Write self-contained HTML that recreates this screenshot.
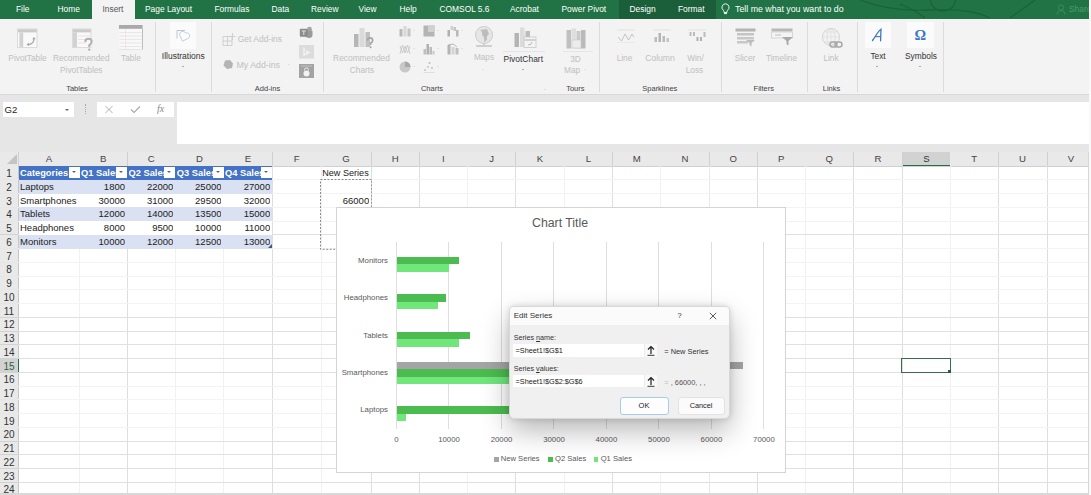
<!DOCTYPE html>
<html><head><meta charset="utf-8">
<style>
*{margin:0;padding:0;box-sizing:border-box}
html,body{width:1091px;height:495px;overflow:hidden;background:#fff;font-family:"Liberation Sans",sans-serif;position:relative}
.a{position:absolute}
.t{position:absolute;white-space:nowrap;line-height:1}
.tab{color:#fff;font-size:8.4px;top:5px}
.dis{position:absolute;white-space:nowrap;line-height:1;color:#c0c0c0;font-size:8.3px}
.en{position:absolute;white-space:nowrap;line-height:1;color:#333;font-size:8.3px}
.gl{position:absolute;white-space:nowrap;line-height:1;color:#444;font-size:7.6px;top:85px}
.sep{position:absolute;top:22px;width:1px;height:70px;background:#dadada}
.box{position:absolute;background:#fff}
.ch{position:absolute;top:152px;height:14px;font-size:9.6px;color:#444;text-align:center;line-height:14px}
.cs{position:absolute;top:152px;width:1px;height:14px;background:#d0d0d0}
.rh{position:absolute;left:0;width:18px;font-size:10px;color:#444;text-align:center;line-height:13.75px;height:13.75px}
.vg{position:absolute;top:166px;width:1px;height:329px;background:#e2e2e2}
.hg{position:absolute;left:18px;width:1073px;height:1px;background:#e6e6e6}
.cell{position:absolute;font-size:9.5px;color:#222;line-height:13.75px;height:13.75px;white-space:nowrap;overflow:hidden}
.r{text-align:right}
.hd{color:#fff;font-weight:bold}
.dd{position:absolute;width:11px;height:11.6px;background:#fff}
.dd:after{content:"";position:absolute;left:3.2px;top:4.6px;border-left:2.3px solid transparent;border-right:2.3px solid transparent;border-top:2.5px solid #666}
.al{position:absolute;font-size:8px;color:#595959;white-space:nowrap;line-height:1}

#root{position:absolute;left:0;top:0;width:1091px;height:495px;overflow:hidden;background:#fff}

</style></head><body><div id="root">
<div class="a" style="left:0;top:0;width:1091px;height:19px;background:#217346"></div>
<div class="a" style="left:619px;top:0;width:97px;height:19px;background:#1b5f3a"></div>
<div class="a" style="left:92px;top:0;width:43px;height:20px;background:#f3f3f3"></div>
<div class="t tab" style="left:16px">File</div>
<div class="t tab" style="left:57.5px">Home</div>
<div class="t tab" style="left:145px">Page Layout</div>
<div class="t tab" style="left:214.5px">Formulas</div>
<div class="t tab" style="left:271.5px">Data</div>
<div class="t tab" style="left:311px">Review</div>
<div class="t tab" style="left:358.5px">View</div>
<div class="t tab" style="left:399.5px">Help</div>
<div class="t tab" style="left:439.5px">COMSOL 5.6</div>
<div class="t tab" style="left:510px">Acrobat</div>
<div class="t tab" style="left:561.5px">Power Pivot</div>
<div class="t tab" style="left:629.5px">Design</div>
<div class="t tab" style="left:678px">Format</div>
<div class="t tab" style="left:102.5px;color:#555">Insert</div>
<svg class="a" style="left:721px;top:3px" width="9" height="12" viewBox="0 0 9 12"><path d="M4.5 0.8a3.6 3.6 0 0 0-2.2 6.4c.5.4.7.9.7 1.5v.8h3v-.8c0-.6.2-1.1.7-1.5A3.6 3.6 0 0 0 4.5.8z" fill="none" stroke="#fff" stroke-width="0.9"/><path d="M3 10.6h3" stroke="#fff" stroke-width="0.9"/></svg>
<div class="t tab" style="left:735px;font-size:8.8px;top:4.8px">Tell me what you want to do</div>
<svg class="a" style="left:840px;top:0" width="251" height="19"><g stroke="#1a6239" stroke-width="1.3" fill="none"><path d="M20 0Q50 12 90 10T150 18"/><circle cx="103" cy="-2" r="13"/><path d="M60 4Q75 10 85 18"/><path d="M170 18L195 0"/></g></svg>
<svg class="a" style="left:1056px;top:4px" width="11" height="11"><circle cx="5" cy="3.5" r="2.6" fill="none" stroke="#3d8a5e" stroke-width="1"/><path d="M1 10.5Q1 6.5 5 6.5Q9 6.5 9 10.5" fill="none" stroke="#3d8a5e" stroke-width="1"/></svg>
<div class="t tab" style="left:1069px;color:#4d9a6e">Share</div>
<div class="a" style="left:0;top:19px;width:1091px;height:75px;background:#f3f3f3"></div>
<div class="a" style="left:154.7px;top:22px;width:1px;height:70px;background:#dcdcdc"></div>
<div class="a" style="left:211.0px;top:22px;width:1px;height:70px;background:#dcdcdc"></div>
<div class="a" style="left:323.0px;top:22px;width:1px;height:70px;background:#dcdcdc"></div>
<div class="a" style="left:599.0px;top:22px;width:1px;height:70px;background:#dcdcdc"></div>
<div class="a" style="left:720.5px;top:22px;width:1px;height:70px;background:#dcdcdc"></div>
<div class="a" style="left:807.0px;top:22px;width:1px;height:70px;background:#dcdcdc"></div>
<div class="a" style="left:856.8px;top:22px;width:1px;height:70px;background:#dcdcdc"></div>
<div class="a" style="left:942.5px;top:22px;width:1px;height:70px;background:#dcdcdc"></div>
<div class="t gl" style="left:17px;width:120px;text-align:center;top:85.45px;font-size:7.5px;">Tables</div>
<div class="t gl" style="left:207.5px;width:120px;text-align:center;top:85.45px;font-size:7.5px;">Add-ins</div>
<div class="t gl" style="left:372px;width:120px;text-align:center;top:85.45px;font-size:7.5px;">Charts</div>
<div class="t gl" style="left:515.3px;width:120px;text-align:center;top:85.45px;font-size:7.5px;">Tours</div>
<div class="t gl" style="left:599.8px;width:120px;text-align:center;top:85.45px;font-size:7.5px;">Sparklines</div>
<div class="t gl" style="left:703.8px;width:120px;text-align:center;top:85.45px;font-size:7.5px;">Filters</div>
<div class="t gl" style="left:771.5px;width:120px;text-align:center;top:85.45px;font-size:7.5px;">Links</div>
<svg class="a" style="left:17px;top:27px" width="22" height="22" viewBox="0 0 22 22"><rect x="0.5" y="2" width="19.5" height="18.5" fill="#f9f9f9" stroke="#d8d8d8" stroke-width="0.9"/><rect x="1" y="2.3" width="18.8" height="3.1" fill="#cbcbcb"/><rect x="2.4" y="5.4" width="3.8" height="14.6" fill="#d2d2d2"/><path d="M11 17.5Q17 17.5 17 11.5" stroke="#a9a9a9" stroke-width="1.3" fill="none"/><path d="M9.5 17.5l2.3-1.8v3.6z M17 10l-1.8 2.3h3.6z" fill="#a9a9a9"/></svg>
<div class="t dis" style="left:-32.5px;width:120px;text-align:center;top:54.05px;font-size:8.3px;">PivotTable</div>
<svg class="a" style="left:70px;top:27px" width="25" height="24" viewBox="0 0 25 24"><rect x="2.5" y="2" width="18.5" height="18.5" fill="#f9f9f9" stroke="#d8d8d8" stroke-width="0.9"/><rect x="3" y="2.3" width="17.8" height="3.1" fill="#cbcbcb"/><rect x="3" y="5.4" width="4" height="14.6" fill="#d2d2d2"/><path d="M8 9h12M8 12.5h12M8 16h8" stroke="#ead9d9" stroke-width="0.8"/><path d="M15.3 15Q15.3 11.8 18.5 11.8Q21.7 11.8 21.7 14.8Q21.7 16.6 19.2 18V20" stroke="#b0b0b0" stroke-width="1.9" fill="none"/><circle cx="19.2" cy="22.6" r="1.2" fill="#b0b0b0"/></svg>
<div class="t dis" style="left:21.299999999999997px;width:120px;text-align:center;top:54.00px;font-size:8.4px;">Recommended</div>
<div class="t dis" style="left:21.299999999999997px;width:120px;text-align:center;top:66.05px;font-size:8.3px;">PivotTables</div>
<svg class="a" style="left:118px;top:24px" width="26" height="27" viewBox="0 0 26 27"><rect x="1" y="1" width="24" height="25" fill="#f8f8f8"/><rect x="1" y="1" width="23.6" height="3.8" fill="#a9a9a9"/><path d="M1.5 8.5H24" stroke="#e3e0e0" stroke-width="0.7"/><path d="M1.5 12.0H24" stroke="#e3e0e0" stroke-width="0.7"/><path d="M1.5 15.5H24" stroke="#e3e0e0" stroke-width="0.7"/><path d="M1.5 19.0H24" stroke="#e3e0e0" stroke-width="0.7"/><path d="M1.5 22.5H24" stroke="#e3e0e0" stroke-width="0.7"/><path d="M7.5 5V25.5" stroke="#eadada" stroke-width="0.6"/><path d="M24.5 4.5V25.5" stroke="#b8b8b8" stroke-width="0.9"/><path d="M1 25.5H24.5" stroke="#dcdcdc" stroke-width="0.7"/></svg>
<div class="t dis" style="left:71px;width:120px;text-align:center;top:54.05px;font-size:8.3px;">Table</div>
<div class="a" style="left:169.5px;top:21.7px;width:26.5px;height:27.5px;background:#fbfbfb"></div>
<svg class="a" style="left:174px;top:26px" width="18" height="18" viewBox="0 0 18 18"><path d="M3 12.5V4.5H11" stroke="#b2bfcc" stroke-width="0.9" fill="none"/><g transform="translate(10.5,9.5) rotate(20)"><path d="M0 6L-4.3 1.7A3.04 3.04 0 0 1 0 -2.6A3.04 3.04 0 0 1 4.3 1.7Z" fill="#fbfcfd" stroke="#c4ced8" stroke-width="0.9"/></g></svg>
<div class="t en" style="left:123.30000000000001px;width:120px;text-align:center;top:52.15px;font-size:8.5px;">Illustrations</div>
<div class="a" style="left:181.8px;top:65.55px;border-left:1.5px solid transparent;border-right:1.5px solid transparent;border-top:1.5px solid #666"></div>
<svg class="a" style="left:222px;top:31.5px" width="14" height="15" viewBox="0 0 14 15"><path d="M1 4.5H10V13.5H1Z M1 9H10 M5.5 4.5V13.5" stroke="#cdcdcd" stroke-width="0.9" fill="none"/><path d="M10.5 1V8M7 4.5H13.5" stroke="#cdcdcd" stroke-width="0.9"/></svg>
<div class="t dis" style="left:237.7px;top:35.45px;font-size:8.5px;">Get Add-ins</div>
<svg class="a" style="left:222px;top:59px" width="12" height="11" viewBox="0 0 12 11"><path d="M3 1.5L8 1L11 4.5L10 9L5 10L1.5 6.5Z" fill="#b4b4b4"/></svg>
<div class="t dis" style="left:236.5px;top:60.50px;font-size:8.8px;">My Add-ins</div>
<div class="a" style="left:288.0px;top:64.25px;border-left:1.5px solid transparent;border-right:1.5px solid transparent;border-top:1.5px solid #ccc"></div>
<svg class="a" style="left:298.5px;top:26px" width="14" height="13" viewBox="0 0 14 13"><circle cx="10.5" cy="3.2" r="2.4" fill="#a5a5a5"/><path d="M6 4.5H12.5Q13.5 4.5 13.5 5.5V9Q13.5 12 10 12Q7.5 12 6 10Z" fill="#9a9a9a"/><rect x="0.8" y="2.8" width="8" height="8" rx="1" fill="#8c8c8c"/><path d="M2.8 5H6.8M4.8 5V9" stroke="#e0e0e0" stroke-width="1"/></svg>
<svg class="a" style="left:298.5px;top:45px" width="15" height="14" viewBox="0 0 15 14"><rect x="0" y="0" width="15" height="13.5" fill="#dcdcdc"/><path d="M5 2.5V10L10 7.5L7 6" stroke="#f4f4f4" stroke-width="1.4" fill="none"/></svg>
<svg class="a" style="left:298.5px;top:63.5px" width="15" height="14" viewBox="0 0 15 14"><rect x="0" y="0" width="15" height="14" fill="#a3a3a3"/><rect x="2" y="1.5" width="11" height="1" fill="#c0c0c0"/><circle cx="7.5" cy="9.5" r="3" fill="#f2f2f2"/><path d="M5.5 6.5V5.5Q5.5 4 7.5 4Q9.5 4 9.5 5.5V6.5" stroke="#f2f2f2" fill="none" stroke-width="0.9"/></svg>
<svg class="a" style="left:353px;top:27px" width="22" height="22" viewBox="0 0 22 22"><rect x="1" y="7" width="4.5" height="13" fill="#b6b6b6"/><rect x="6.5" y="1" width="5" height="19" fill="#dadada"/><rect x="12.5" y="5" width="4.5" height="15" fill="#c0c0c0"/><path d="M14.3 13.6Q14.3 10.8 17 10.8Q19.7 10.8 19.7 13.4Q19.7 15 17.6 16.2V18" stroke="#a6a6a6" stroke-width="1.7" fill="none"/><circle cx="17.6" cy="20.3" r="1" fill="#a6a6a6"/></svg>
<div class="t dis" style="left:301.5px;width:120px;text-align:center;top:54.00px;font-size:8.4px;">Recommended</div>
<div class="t dis" style="left:302px;width:120px;text-align:center;top:66.05px;font-size:8.3px;">Charts</div>
<svg class="a" style="left:399px;top:25px" width="12" height="12" viewBox="0 0 12 12"><rect x="0.5" y="4" width="3" height="7.5" fill="#b8b8b8"/><rect x="4.5" y="1" width="3" height="10.5" fill="#d8d8d8"/><rect x="8.5" y="3.5" width="3" height="8" fill="#c4c4c4"/></svg>
<div class="a" style="left:412.7px;top:30.35px;border-left:1.3px solid transparent;border-right:1.3px solid transparent;border-top:1.3px solid #cfcfcf"></div>
<svg class="a" style="left:423px;top:25px" width="12" height="12" viewBox="0 0 12 12"><rect x="0.5" y="0.5" width="11" height="11" fill="#b4b4b4"/><rect x="5" y="0.5" width="6.5" height="6.5" fill="#d0d0d0"/></svg>
<div class="a" style="left:436.7px;top:30.35px;border-left:1.3px solid transparent;border-right:1.3px solid transparent;border-top:1.3px solid #cfcfcf"></div>
<svg class="a" style="left:447px;top:25px" width="12" height="12" viewBox="0 0 12 12"><rect x="0.5" y="5" width="2.5" height="6.5" fill="#b0b0b0"/><rect x="3.5" y="1" width="2.5" height="4" fill="#cfcfcf"/><rect x="6.5" y="2" width="2.5" height="4" fill="#c4c4c4"/><rect x="9" y="5" width="2.5" height="6.5" fill="#b8b8b8"/></svg>
<div class="a" style="left:460.7px;top:30.35px;border-left:1.3px solid transparent;border-right:1.3px solid transparent;border-top:1.3px solid #cfcfcf"></div>
<svg class="a" style="left:399px;top:43px" width="12" height="12" viewBox="0 0 12 12"><path d="M1 11L3.5 2L6 10L8.5 2L11 11M1 3L3.5 10L6 3L8.5 10L11 3" stroke="#c8c8c8" stroke-width="0.9" fill="none"/></svg>
<div class="a" style="left:412.7px;top:48.35px;border-left:1.3px solid transparent;border-right:1.3px solid transparent;border-top:1.3px solid #cfcfcf"></div>
<svg class="a" style="left:423px;top:43px" width="12" height="12" viewBox="0 0 12 12"><rect x="0.5" y="6" width="2.5" height="5.5" fill="#c0c0c0"/><rect x="3.5" y="1" width="2.5" height="10.5" fill="#b0b0b0"/><rect x="6.5" y="4" width="2.5" height="7.5" fill="#bcbcbc"/><rect x="9.5" y="8" width="2" height="3.5" fill="#c8c8c8"/></svg>
<div class="a" style="left:436.7px;top:48.35px;border-left:1.3px solid transparent;border-right:1.3px solid transparent;border-top:1.3px solid #cfcfcf"></div>
<svg class="a" style="left:447px;top:43px" width="12" height="12" viewBox="0 0 12 12"><rect x="0.5" y="2" width="3" height="9.5" fill="#b4b4b4"/><rect x="4.5" y="4" width="3" height="7.5" fill="#d4d4d4"/><rect x="8.5" y="5" width="3" height="6.5" fill="#c0c0c0"/><path d="M1 2L6 1L10 4" stroke="#a8a8a8" stroke-width="0.8" fill="none"/></svg>
<div class="a" style="left:460.7px;top:48.35px;border-left:1.3px solid transparent;border-right:1.3px solid transparent;border-top:1.3px solid #cfcfcf"></div>
<svg class="a" style="left:399px;top:60.5px" width="12" height="12" viewBox="0 0 12 12"><circle cx="6" cy="6" r="5.5" fill="#c8c8c8"/><path d="M6 6V0.5A5.5 5.5 0 0 1 11.5 6Z" fill="#a8a8a8"/></svg>
<div class="a" style="left:412.7px;top:65.85px;border-left:1.3px solid transparent;border-right:1.3px solid transparent;border-top:1.3px solid #cfcfcf"></div>
<svg class="a" style="left:423px;top:60.5px" width="12" height="12" viewBox="0 0 12 12"><circle cx="2" cy="9" r="1" fill="#c4c4c4"/><circle cx="5" cy="6" r="1" fill="#c4c4c4"/><circle cx="6.5" cy="2" r="1" fill="#bdbdbd"/><circle cx="9" cy="7" r="1" fill="#c4c4c4"/><path d="M0.5 11.5H11.5" stroke="#d8d8d8" stroke-width="0.8"/></svg>
<div class="a" style="left:436.7px;top:65.85px;border-left:1.3px solid transparent;border-right:1.3px solid transparent;border-top:1.3px solid #cfcfcf"></div>
<svg class="a" style="left:473.5px;top:24.5px" width="20" height="25" viewBox="0 0 20 25"><circle cx="10" cy="10" r="8.5" fill="#e6e6e6" stroke="#cdcdcd" stroke-width="1"/><path d="M6 5Q9 7 8 10Q11 12 10 17L13 15Q12 11 15 9L13 4Z" fill="#bdbdbd"/><path d="M2 21H18" stroke="#c6c6c6" stroke-width="1.6"/><path d="M10 18.5V21" stroke="#c6c6c6" stroke-width="1.4"/></svg>
<div class="t dis" style="left:424px;width:120px;text-align:center;top:54.10px;font-size:8.2px;">Maps</div>
<div class="a" style="left:482.2px;top:69.35px;border-left:1.3px solid transparent;border-right:1.3px solid transparent;border-top:1.3px solid #d2d2d2"></div>
<svg class="a" style="left:513.5px;top:27px" width="23" height="21" viewBox="0 0 23 21"><rect x="0.5" y="6" width="4.5" height="14" fill="#b4b4b4"/><rect x="6" y="0.5" width="4.5" height="19.5" fill="#dcdcdc"/><rect x="11.5" y="4" width="4.5" height="7" fill="#bcbcbc"/><rect x="10" y="10" width="12" height="10.5" fill="#f4f4f4" stroke="#c8c8c8" stroke-width="0.8"/><path d="M10.5 13H21.5" stroke="#c8c8c8" stroke-width="1.6"/><path d="M14 18Q18 18 18 15" stroke="#aaa" stroke-width="0.8" fill="none"/></svg>
<div class="a" style="left:503px;top:51px;width:42px;height:1px;background:#e4e4e4"></div>
<div class="t en" style="left:463.29999999999995px;width:120px;text-align:center;top:54.77px;font-size:8.45px;">PivotChart</div>
<div class="a" style="left:521.8px;top:69.45px;border-left:1.5px solid transparent;border-right:1.5px solid transparent;border-top:1.5px solid #666"></div>
<div class="a" style="left:544.2px;top:88.85px;border-left:1.3px solid transparent;border-right:1.3px solid transparent;border-top:1.3px solid #c8c8c8"></div>
<svg class="a" style="left:565.5px;top:27.5px" width="20" height="21" viewBox="0 0 20 21"><rect x="0.5" y="2" width="4.5" height="18.5" fill="#c0c0c0"/><rect x="5.5" y="0.5" width="4.5" height="20" fill="#dedede"/><rect x="10.5" y="3" width="4" height="17.5" fill="#cacaca"/><rect x="15" y="2" width="4.5" height="18.5" fill="#bababa"/><rect x="6" y="12" width="9" height="8" fill="#ececec" stroke="#c8c8c8" stroke-width="0.6"/></svg>
<div class="a" style="left:563px;top:51px;width:30px;height:1px;background:#e6e6e6"></div>
<div class="t dis" style="left:515.5px;width:120px;text-align:center;top:54.85px;font-size:8.3px;">3D</div>
<div class="t dis" style="left:564px;top:66.05px;font-size:8.3px;">Map</div>
<div class="a" style="left:584.2px;top:69.35px;border-left:1.3px solid transparent;border-right:1.3px solid transparent;border-top:1.3px solid #cfcfcf"></div>
<svg class="a" style="left:616.5px;top:29px" width="18" height="14" viewBox="0 0 18 14"><path d="M0.5 1H17.5" stroke="#dcdcdc" stroke-width="0.8"/><path d="M1 8L4.5 12L8 5L11.5 11L15 5L17 8" stroke="#bdbdbd" stroke-width="0.9" fill="none"/><path d="M0.5 13.5H17.5" stroke="#e4e4e4" stroke-width="0.6"/></svg>
<div class="t dis" style="left:564.5px;width:120px;text-align:center;top:54.05px;font-size:8.3px;">Line</div>
<svg class="a" style="left:652.5px;top:29px" width="18" height="14" viewBox="0 0 18 14"><path d="M0.5 1H17.5" stroke="#dcdcdc" stroke-width="0.8"/><rect x="1.5" y="8" width="2.5" height="5" fill="#bcbcbc"/><rect x="5.5" y="4" width="2.5" height="9" fill="#b4b4b4"/><rect x="9.5" y="7" width="2.5" height="6" fill="#bcbcbc"/><rect x="13.5" y="9" width="2.5" height="4" fill="#c4c4c4"/></svg>
<div class="t dis" style="left:600px;width:120px;text-align:center;top:53.90px;font-size:8.6px;">Column</div>
<svg class="a" style="left:688px;top:29px" width="18" height="14" viewBox="0 0 18 14"><path d="M0.5 1H17.5" stroke="#dcdcdc" stroke-width="0.8"/><rect x="1.5" y="3" width="2" height="4" fill="#bcbcbc"/><rect x="5" y="3" width="2" height="4" fill="#bcbcbc"/><rect x="8.5" y="8" width="2" height="4" fill="#b0b0b0"/><rect x="12" y="8" width="2" height="4" fill="#b0b0b0"/><rect x="15.5" y="3" width="2" height="5" fill="#bcbcbc"/></svg>
<div class="t dis" style="left:635.5px;width:120px;text-align:center;top:54.05px;font-size:8.3px;">Win/</div>
<div class="t dis" style="left:634.5px;width:120px;text-align:center;top:66.05px;font-size:8.3px;">Loss</div>
<svg class="a" style="left:734.5px;top:27.5px" width="21" height="19" viewBox="0 0 21 19"><rect x="0.5" y="0.5" width="20" height="3" fill="#b4b4b4"/><rect x="2" y="5" width="17" height="2.5" fill="#c4c4c4"/><rect x="2" y="9" width="17" height="2.5" fill="#c8c8c8"/><rect x="2" y="13" width="11" height="2.5" fill="#c8c8c8"/><path d="M11 12H20L16.5 15V18.5L14.5 17V15Z" fill="#bcbcbc"/></svg>
<div class="t dis" style="left:685px;width:120px;text-align:center;top:54.05px;font-size:8.3px;">Slicer</div>
<svg class="a" style="left:770.5px;top:28px" width="23" height="18" viewBox="0 0 23 18"><rect x="0.5" y="0.5" width="21" height="3" fill="#b8b8b8"/><rect x="0.5" y="4" width="21" height="6" fill="#f4f4f4" stroke="#cfcfcf" stroke-width="0.8"/><path d="M4 7H10" stroke="#c0c0c0" stroke-width="1"/><path d="M11 9H22L17.5 13V17.5L15.5 16V13Z" fill="#a9a9a9"/></svg>
<div class="t dis" style="left:721.5px;width:120px;text-align:center;top:54.05px;font-size:8.3px;">Timeline</div>
<svg class="a" style="left:820.5px;top:26.5px" width="23" height="23" viewBox="0 0 23 23"><circle cx="10" cy="10" r="8.5" fill="#f2f2f2" stroke="#d0d0d0" stroke-width="0.9"/><path d="M1.5 10H18.5M10 1.5V18.5M3.5 5H16.5M3.5 15H16.5" stroke="#d8d8d8" stroke-width="0.6"/><ellipse cx="10" cy="10" rx="4" ry="8.5" fill="none" stroke="#d4d4d4" stroke-width="0.6"/><rect x="9" y="15" width="7" height="5" rx="2.5" fill="none" stroke="#a8a8a8" stroke-width="1.5"/><rect x="14" y="15" width="7" height="5" rx="2.5" fill="none" stroke="#a8a8a8" stroke-width="1.5"/></svg>
<div class="t dis" style="left:771px;width:120px;text-align:center;top:54.05px;font-size:8.3px;">Link</div>
<div class="a" style="left:865px;top:22px;width:25.5px;height:25.5px;background:#fbfbfb"></div>
<svg class="a" style="left:871px;top:28px" width="13" height="14" viewBox="0 0 13 14"><path d="M1.5 12.5Q4 9 6.5 5Q8.5 2 10 1.2L9.6 12.8" stroke="#3c77bd" stroke-width="1.3" fill="none" stroke-linecap="round"/><path d="M4.2 8.6H9.8" stroke="#3c77bd" stroke-width="1.1"/></svg>
<div class="t en" style="left:818px;width:120px;text-align:center;top:52.05px;font-size:8.3px;">Text</div>
<div class="a" style="left:876.3px;top:65.55px;border-left:1.5px solid transparent;border-right:1.5px solid transparent;border-top:1.5px solid #666"></div>
<div class="a" style="left:907px;top:22px;width:26.5px;height:25.5px;background:#fbfbfb"></div>
<div class="t en" style="left:914.5px;top:28.05px;font-size:14.5px;font-family:Liberation Serif;font-weight:bold;color:#3c77bd">Ω</div>
<div class="t en" style="left:861px;width:120px;text-align:center;top:52.03px;font-size:8.35px;">Symbols</div>
<div class="a" style="left:919.0px;top:65.55px;border-left:1.5px solid transparent;border-right:1.5px solid transparent;border-top:1.5px solid #666"></div>
<div class="a" style="left:0;top:94px;width:1091px;height:58px;background:#e6e6e6"></div>
<div class="a" style="left:0;top:94px;width:1091px;height:1px;background:#d8d8d8"></div>
<div class="box" style="left:3px;top:102px;width:71px;height:15px"></div>
<div class="t" style="left:4.5px;top:105px;font-size:9.6px;color:#262626">G2</div>
<div class="a" style="left:65px;top:108.5px;border-left:2.5px solid transparent;border-right:2.5px solid transparent;border-top:2.5px solid #666"></div>
<div class="a" style="left:85px;top:104px;width:1px;height:10px;border-left:1px dotted #aaa"></div>
<div class="box" style="left:97px;top:102px;width:77px;height:15px"></div>
<svg class="a" style="left:104px;top:105px" width="10" height="9"><path d="M1.5 1L8.5 8M8.5 1L1.5 8" stroke="#a8a8a8" stroke-width="0.9"/></svg>
<svg class="a" style="left:130px;top:105px" width="11" height="9"><path d="M1 4.5L4 7.5L10 1.5" stroke="#a8a8a8" stroke-width="1.1" fill="none"/></svg>
<div class="t" style="left:157px;top:104px;font-family:Liberation Serif;font-style:italic;font-size:10px;color:#888">fx</div>
<div class="box" style="left:177px;top:102px;width:914px;height:42px"></div>
<div class="a" style="left:0;top:152px;width:1091px;height:14px;background:#e9e9e9"></div>
<div class="a" style="left:0;top:165.5px;width:1091px;height:1px;background:#d0d0d0"></div>
<svg class="a" style="left:5px;top:153px" width="13" height="12"><path d="M12 1L12 11L2 11Z" fill="#c4c4c4"/></svg>
<div class="a" style="left:902.5px;top:152px;width:47.799999999999955px;height:14px;background:#d2d2d2;border-bottom:1.2px solid #217346"></div>
<div class="ch" style="left:18.5px;width:61.0px;color:#444">A</div>
<div class="ch" style="left:79.5px;width:47.5px;color:#444">B</div>
<div class="cs" style="left:126.5px"></div>
<div class="ch" style="left:127.0px;width:48.30000000000001px;color:#444">C</div>
<div class="ch" style="left:175.3px;width:48.19999999999999px;color:#444">D</div>
<div class="ch" style="left:223.5px;width:48.69999999999999px;color:#444">E</div>
<div class="cs" style="left:271.7px"></div>
<div class="ch" style="left:272.2px;width:48.80000000000001px;color:#444">F</div>
<div class="ch" style="left:321.0px;width:50.19999999999999px;color:#444">G</div>
<div class="cs" style="left:370.7px"></div>
<div class="ch" style="left:371.2px;width:48.10000000000002px;color:#444">H</div>
<div class="cs" style="left:418.8px"></div>
<div class="ch" style="left:419.3px;width:48.19999999999999px;color:#444">I</div>
<div class="ch" style="left:467.5px;width:48.299999999999955px;color:#444">J</div>
<div class="cs" style="left:515.3px"></div>
<div class="ch" style="left:515.8px;width:48.40000000000009px;color:#444">K</div>
<div class="ch" style="left:564.2px;width:48.5px;color:#444">L</div>
<div class="cs" style="left:612.2px"></div>
<div class="ch" style="left:612.7px;width:48.09999999999991px;color:#444">M</div>
<div class="ch" style="left:660.8px;width:48.200000000000045px;color:#444">N</div>
<div class="cs" style="left:708.5px"></div>
<div class="ch" style="left:709.0px;width:48.299999999999955px;color:#444">O</div>
<div class="cs" style="left:756.8px"></div>
<div class="ch" style="left:757.3px;width:48.0px;color:#444">P</div>
<div class="ch" style="left:805.3px;width:48.10000000000002px;color:#444">Q</div>
<div class="cs" style="left:852.9px"></div>
<div class="ch" style="left:853.4px;width:49.10000000000002px;color:#444">R</div>
<div class="cs" style="left:902.0px"></div>
<div class="ch" style="left:902.5px;width:47.799999999999955px;color:#333">S</div>
<div class="ch" style="left:950.3px;width:47.90000000000009px;color:#444">T</div>
<div class="cs" style="left:997.7px"></div>
<div class="ch" style="left:998.2px;width:48.799999999999955px;color:#444">U</div>
<div class="cs" style="left:1046.5px"></div>
<div class="ch" style="left:1047.0px;width:48.0px;color:#444">V</div>
<div class="cs" style="left:18px"></div>
<div class="a" style="left:0;top:166px;width:18.5px;height:329px;background:#e9e9e9;border-right:1px solid #c6c6c6"></div>
<div class="a" style="left:0;top:358.5px;width:18.5px;height:13.75px;background:#d2d2d2;border-right:1.5px solid #217346"></div>
<div class="rh" style="top:167.1px;color:#333">1</div>
<div class="rh" style="top:180.85px;color:#333">2</div>
<div class="rh" style="top:194.6px;color:#333">3</div>
<div class="rh" style="top:208.35px;color:#333">4</div>
<div class="rh" style="top:222.1px;color:#333">5</div>
<div class="rh" style="top:235.85px;color:#333">6</div>
<div class="rh" style="top:249.6px;color:#333">7</div>
<div class="rh" style="top:263.35px;color:#333">8</div>
<div class="rh" style="top:277.1px;color:#333">9</div>
<div class="rh" style="top:290.85px;color:#333">10</div>
<div class="rh" style="top:304.6px;color:#333">11</div>
<div class="rh" style="top:318.35px;color:#333">12</div>
<div class="rh" style="top:332.1px;color:#333">13</div>
<div class="rh" style="top:345.85px;color:#333">14</div>
<div class="rh" style="top:359.6px;color:#2a5e40">15</div>
<div class="rh" style="top:373.35px;color:#333">16</div>
<div class="rh" style="top:387.1px;color:#333">17</div>
<div class="rh" style="top:400.85px;color:#333">18</div>
<div class="rh" style="top:414.6px;color:#333">19</div>
<div class="rh" style="top:428.35px;color:#333">20</div>
<div class="rh" style="top:442.1px;color:#333">21</div>
<div class="rh" style="top:455.85px;color:#333">22</div>
<div class="rh" style="top:469.6px;color:#333">23</div>
<div class="rh" style="top:483.35px;color:#333">24</div>
<div class="rh" style="top:497.1px;color:#333">25</div>
<div class="vg" style="left:79.0px;background:#f1f1f1"></div>
<div class="vg" style="left:126.5px;background:#dedede"></div>
<div class="vg" style="left:174.8px;background:#f1f1f1"></div>
<div class="vg" style="left:223.0px;background:#f1f1f1"></div>
<div class="vg" style="left:271.7px;background:#dedede"></div>
<div class="vg" style="left:320.5px;background:#f1f1f1"></div>
<div class="vg" style="left:370.7px;background:#dedede"></div>
<div class="vg" style="left:418.8px;background:#dedede"></div>
<div class="vg" style="left:467.0px;background:#f1f1f1"></div>
<div class="vg" style="left:515.3px;background:#dedede"></div>
<div class="vg" style="left:563.7px;background:#f1f1f1"></div>
<div class="vg" style="left:612.2px;background:#dedede"></div>
<div class="vg" style="left:660.3px;background:#f1f1f1"></div>
<div class="vg" style="left:708.5px;background:#e8e8e8"></div>
<div class="vg" style="left:756.8px;background:#dedede"></div>
<div class="vg" style="left:804.8px;background:#f1f1f1"></div>
<div class="vg" style="left:852.9px;background:#dedede"></div>
<div class="vg" style="left:902.0px;background:#dedede"></div>
<div class="vg" style="left:949.8px;background:#f1f1f1"></div>
<div class="vg" style="left:997.7px;background:#dedede"></div>
<div class="vg" style="left:1046.5px;background:#dedede"></div>
<div class="vg" style="left:1094.5px;background:#f1f1f1"></div>
<div class="hg" style="top:179.25px;background:#f3f3f3"></div>
<div class="a" style="left:0;top:179.25px;width:18px;height:1px;background:#e6e6e6"></div>
<div class="hg" style="top:193.0px;background:#f3f3f3"></div>
<div class="a" style="left:0;top:193.0px;width:18px;height:1px;background:#e6e6e6"></div>
<div class="hg" style="top:206.75px;background:#f3f3f3"></div>
<div class="a" style="left:0;top:206.75px;width:18px;height:1px;background:#e6e6e6"></div>
<div class="hg" style="top:220.5px;background:#f3f3f3"></div>
<div class="a" style="left:0;top:220.5px;width:18px;height:1px;background:#e6e6e6"></div>
<div class="hg" style="top:234.25px;background:#e0e0e0"></div>
<div class="a" style="left:0;top:234.25px;width:18px;height:1px;background:#d2d2d2"></div>
<div class="hg" style="top:248.0px;background:#f3f3f3"></div>
<div class="a" style="left:0;top:248.0px;width:18px;height:1px;background:#e6e6e6"></div>
<div class="hg" style="top:261.75px;background:#f3f3f3"></div>
<div class="a" style="left:0;top:261.75px;width:18px;height:1px;background:#e6e6e6"></div>
<div class="hg" style="top:275.5px;background:#f3f3f3"></div>
<div class="a" style="left:0;top:275.5px;width:18px;height:1px;background:#e6e6e6"></div>
<div class="hg" style="top:289.25px;background:#f3f3f3"></div>
<div class="a" style="left:0;top:289.25px;width:18px;height:1px;background:#e6e6e6"></div>
<div class="hg" style="top:303.0px;background:#f3f3f3"></div>
<div class="a" style="left:0;top:303.0px;width:18px;height:1px;background:#e6e6e6"></div>
<div class="hg" style="top:316.75px;background:#e0e0e0"></div>
<div class="a" style="left:0;top:316.75px;width:18px;height:1px;background:#d2d2d2"></div>
<div class="hg" style="top:330.5px;background:#e0e0e0"></div>
<div class="a" style="left:0;top:330.5px;width:18px;height:1px;background:#d2d2d2"></div>
<div class="hg" style="top:344.25px;background:#e0e0e0"></div>
<div class="a" style="left:0;top:344.25px;width:18px;height:1px;background:#d2d2d2"></div>
<div class="hg" style="top:358.0px;background:#e0e0e0"></div>
<div class="a" style="left:0;top:358.0px;width:18px;height:1px;background:#d2d2d2"></div>
<div class="hg" style="top:371.75px;background:#e0e0e0"></div>
<div class="a" style="left:0;top:371.75px;width:18px;height:1px;background:#d2d2d2"></div>
<div class="hg" style="top:385.5px;background:#f3f3f3"></div>
<div class="a" style="left:0;top:385.5px;width:18px;height:1px;background:#e6e6e6"></div>
<div class="hg" style="top:399.25px;background:#f3f3f3"></div>
<div class="a" style="left:0;top:399.25px;width:18px;height:1px;background:#e6e6e6"></div>
<div class="hg" style="top:413.0px;background:#f3f3f3"></div>
<div class="a" style="left:0;top:413.0px;width:18px;height:1px;background:#e6e6e6"></div>
<div class="hg" style="top:426.75px;background:#f3f3f3"></div>
<div class="a" style="left:0;top:426.75px;width:18px;height:1px;background:#e6e6e6"></div>
<div class="hg" style="top:440.5px;background:#e0e0e0"></div>
<div class="a" style="left:0;top:440.5px;width:18px;height:1px;background:#d2d2d2"></div>
<div class="hg" style="top:454.25px;background:#e0e0e0"></div>
<div class="a" style="left:0;top:454.25px;width:18px;height:1px;background:#d2d2d2"></div>
<div class="hg" style="top:468.0px;background:#e0e0e0"></div>
<div class="a" style="left:0;top:468.0px;width:18px;height:1px;background:#d2d2d2"></div>
<div class="hg" style="top:481.75px;background:#e0e0e0"></div>
<div class="a" style="left:0;top:481.75px;width:18px;height:1px;background:#d2d2d2"></div>
<div class="hg" style="top:495.5px;background:#f3f3f3"></div>
<div class="a" style="left:0;top:495.5px;width:18px;height:1px;background:#e6e6e6"></div>
<div class="a" style="left:18.5px;top:166.0px;width:253.7px;height:13.75px;background:#4472c4"></div>
<div class="a" style="left:18.5px;top:179.75px;width:253.7px;height:13.75px;background:#d9e1f2"></div>
<div class="a" style="left:18.5px;top:207.25px;width:253.7px;height:13.75px;background:#d9e1f2"></div>
<div class="a" style="left:18.5px;top:234.75px;width:253.7px;height:13.75px;background:#d9e1f2"></div>
<div class="a" style="left:18.5px;top:193.5px;width:253.7px;height:13.75px;background:#fff"></div>
<div class="a" style="left:18.5px;top:221.0px;width:253.7px;height:13.75px;background:#fff"></div>
<div class="cell hd" style="left:20.0px;top:166.8px;width:59.0px;font-size:9.3px">Categories</div>
<div class="dd" style="left:68.5px;top:166.8px"></div>
<div class="cell hd" style="left:81.0px;top:166.8px;width:45.5px;font-size:9.3px">Q1 Sales</div>
<div class="dd" style="left:116.0px;top:166.8px"></div>
<div class="cell hd" style="left:128.5px;top:166.8px;width:46.30000000000001px;font-size:9.3px">Q2 Sales</div>
<div class="dd" style="left:164.3px;top:166.8px"></div>
<div class="cell hd" style="left:176.8px;top:166.8px;width:46.19999999999999px;font-size:9.3px">Q3 Sales</div>
<div class="dd" style="left:212.5px;top:166.8px"></div>
<div class="cell hd" style="left:225.0px;top:166.8px;width:46.69999999999999px;font-size:9.3px">Q4 Sales</div>
<div class="dd" style="left:261.2px;top:166.8px"></div>
<div class="cell" style="left:20.0px;top:179.75px;width:60px">Laptops</div>
<div class="cell r" style="left:79.5px;top:179.75px;width:45.5px">1800</div>
<div class="cell r" style="left:127.0px;top:179.75px;width:46.30000000000001px">22000</div>
<div class="cell r" style="left:175.3px;top:179.75px;width:46.19999999999999px">25000</div>
<div class="cell r" style="left:223.5px;top:179.75px;width:46.69999999999999px">27000</div>
<div class="cell" style="left:20.0px;top:193.5px;width:60px">Smartphones</div>
<div class="cell r" style="left:79.5px;top:193.5px;width:45.5px">30000</div>
<div class="cell r" style="left:127.0px;top:193.5px;width:46.30000000000001px">31000</div>
<div class="cell r" style="left:175.3px;top:193.5px;width:46.19999999999999px">29500</div>
<div class="cell r" style="left:223.5px;top:193.5px;width:46.69999999999999px">32000</div>
<div class="cell" style="left:20.0px;top:207.25px;width:60px">Tablets</div>
<div class="cell r" style="left:79.5px;top:207.25px;width:45.5px">12000</div>
<div class="cell r" style="left:127.0px;top:207.25px;width:46.30000000000001px">14000</div>
<div class="cell r" style="left:175.3px;top:207.25px;width:46.19999999999999px">13500</div>
<div class="cell r" style="left:223.5px;top:207.25px;width:46.69999999999999px">15000</div>
<div class="cell" style="left:20.0px;top:221.0px;width:60px">Headphones</div>
<div class="cell r" style="left:79.5px;top:221.0px;width:45.5px">8000</div>
<div class="cell r" style="left:127.0px;top:221.0px;width:46.30000000000001px">9500</div>
<div class="cell r" style="left:175.3px;top:221.0px;width:46.19999999999999px">10000</div>
<div class="cell r" style="left:223.5px;top:221.0px;width:46.69999999999999px">11000</div>
<div class="cell" style="left:20.0px;top:234.75px;width:60px">Monitors</div>
<div class="cell r" style="left:79.5px;top:234.75px;width:45.5px">10000</div>
<div class="cell r" style="left:127.0px;top:234.75px;width:46.30000000000001px">12000</div>
<div class="cell r" style="left:175.3px;top:234.75px;width:46.19999999999999px">12500</div>
<div class="cell r" style="left:223.5px;top:234.75px;width:46.69999999999999px">13000</div>
<svg class="a" style="left:267.7px;top:244.0px" width="4" height="4"><path d="M4 0V4H0Z" fill="#405580"/></svg>
<div class="cell" style="left:322.2px;top:166.9px;width:60px;font-size:9.1px">New Series</div>
<div class="cell r" style="left:321.0px;top:193.5px;width:48.19999999999999px">66000</div>
<svg class="a" style="left:320.0px;top:178.75px" width="52.2" height="70.8"><rect x="0.5" y="0.5" width="51.2" height="69.8" fill="none" stroke="#8a8a8a" stroke-width="1" stroke-dasharray="2 1.5"/></svg>
<div class="a" style="left:901.0px;top:357.5px;width:49.799999999999955px;height:15.75px;border:1.3px solid #3b6b4f"></div>
<div class="a" style="left:948.3px;top:370.25px;width:2.8px;height:2.8px;background:#2a5a3f"></div>
<div class="a" style="left:0;top:493px;width:1091px;height:2px;background:#d9d9d9"></div>
<div class="a" style="left:1088px;top:152px;width:1px;height:343px;background:#d6d6d6"></div>
<div class="a" style="left:1089px;top:0;width:2px;height:495px;background:#f9f9f9"></div>
<div class="a" style="left:336px;top:206.5px;width:450px;height:266.5px;background:#fff;border:1px solid #d4d4d4"></div>
<div class="t" style="left:532px;top:216.8px;font-size:12.3px;color:#595959">Chart Title</div>
<div class="a" style="left:396.00px;top:242px;width:1px;height:186.8px;background:#dedede"></div>
<div class="al" style="left:366.50px;width:60px;text-align:center;top:436px;font-size:7.8px">0</div>
<div class="a" style="left:448.49px;top:242px;width:1px;height:186.8px;background:#dedede"></div>
<div class="al" style="left:418.99px;width:60px;text-align:center;top:436px;font-size:7.8px">10000</div>
<div class="a" style="left:500.98px;top:242px;width:1px;height:186.8px;background:#dedede"></div>
<div class="al" style="left:471.48px;width:60px;text-align:center;top:436px;font-size:7.8px">20000</div>
<div class="a" style="left:553.47px;top:242px;width:1px;height:186.8px;background:#dedede"></div>
<div class="al" style="left:523.97px;width:60px;text-align:center;top:436px;font-size:7.8px">30000</div>
<div class="a" style="left:605.96px;top:242px;width:1px;height:186.8px;background:#dedede"></div>
<div class="al" style="left:576.46px;width:60px;text-align:center;top:436px;font-size:7.8px">40000</div>
<div class="a" style="left:658.45px;top:242px;width:1px;height:186.8px;background:#dedede"></div>
<div class="al" style="left:628.95px;width:60px;text-align:center;top:436px;font-size:7.8px">50000</div>
<div class="a" style="left:710.94px;top:242px;width:1px;height:186.8px;background:#dedede"></div>
<div class="al" style="left:681.44px;width:60px;text-align:center;top:436px;font-size:7.8px">60000</div>
<div class="a" style="left:763.43px;top:242px;width:1px;height:186.8px;background:#dedede"></div>
<div class="al" style="left:733.93px;width:60px;text-align:center;top:436px;font-size:7.8px">70000</div>
<div class="al" style="left:308px;width:80px;text-align:right;top:256.88px;font-size:7.8px">Monitors</div>
<div class="a" style="left:396.5px;top:256.93px;width:62.99px;height:7.5px;background:#4bbc4f"></div>
<div class="a" style="left:396.5px;top:264.43px;width:52.49px;height:7.5px;background:#70e67b"></div>
<div class="al" style="left:308px;width:80px;text-align:right;top:294.24px;font-size:7.8px">Headphones</div>
<div class="a" style="left:396.5px;top:294.29px;width:49.87px;height:7.5px;background:#4bbc4f"></div>
<div class="a" style="left:396.5px;top:301.79px;width:41.99px;height:7.5px;background:#70e67b"></div>
<div class="al" style="left:308px;width:80px;text-align:right;top:331.60px;font-size:7.8px">Tablets</div>
<div class="a" style="left:396.5px;top:331.65px;width:73.49px;height:7.5px;background:#4bbc4f"></div>
<div class="a" style="left:396.5px;top:339.15px;width:62.99px;height:7.5px;background:#70e67b"></div>
<div class="al" style="left:308px;width:80px;text-align:right;top:368.96px;font-size:7.8px">Smartphones</div>
<div class="a" style="left:396.5px;top:361.51px;width:346.43px;height:7.5px;background:#a5a5a5"></div>
<div class="a" style="left:396.5px;top:369.01px;width:162.72px;height:7.5px;background:#4bbc4f"></div>
<div class="a" style="left:396.5px;top:376.51px;width:157.47px;height:7.5px;background:#70e67b"></div>
<div class="al" style="left:308px;width:80px;text-align:right;top:406.32px;font-size:7.8px">Laptops</div>
<div class="a" style="left:396.5px;top:406.37px;width:115.48px;height:7.5px;background:#4bbc4f"></div>
<div class="a" style="left:396.5px;top:413.87px;width:9.45px;height:7.5px;background:#70e67b"></div>
<div class="a" style="left:494px;top:457.0px;width:4.5px;height:4.5px;background:#a5a5a5"></div>
<div class="al" style="left:500.8px;top:455.0px;font-size:7.6px">New Series</div>
<div class="a" style="left:548.3px;top:457.0px;width:4.5px;height:4.5px;background:#4bbc4f"></div>
<div class="al" style="left:555px;top:455.0px;font-size:7.6px">Q2 Sales</div>
<div class="a" style="left:593.8px;top:457.0px;width:4.5px;height:4.5px;background:#70e67b"></div>
<div class="al" style="left:600.7px;top:455.0px;font-size:7.6px">Q1 Sales</div>
<div class="a" style="left:509px;top:306px;width:221px;height:112.5px;border-radius:5px;background:#f0f0f0;box-shadow:0 12px 28px rgba(0,0,0,0.28),0 0 6px rgba(0,0,0,0.14);overflow:hidden;border:1px solid #d8d8d8">
<div class="a" style="left:0;top:0;width:221px;height:18px;background:#fbfbfb"></div>
</div>
<div class="t" style="left:513.7px;top:311.5px;font-size:8px;color:#333">Edit Series</div>
<div class="t" style="left:677.5px;top:311.5px;font-size:7.5px;color:#333">?</div>
<svg class="a" style="left:709px;top:312px" width="8" height="8"><path d="M0.8 0.8L7.2 7.2M7.2 0.8L0.8 7.2" stroke="#333" stroke-width="0.8"/></svg>
<div class="t" style="left:513.7px;top:333.5px;font-size:7.2px;color:#333">Series <u>n</u>ame:</div>
<div class="box" style="left:513px;top:344px;width:144px;height:12.5px"></div><div class="a" style="left:644px;top:344px;width:13px;height:12.5px;background:#f8f8f8;border-left:1px solid #ececec"></div>
<div class="t" style="left:515.5px;top:347px;font-size:7.3px;color:#222">=Sheet1!$G$1</div>
<svg class="a" style="left:646px;top:345px" width="10" height="11"><path d="M5 9V1.5M2 4.5L5 1.5L8 4.5" stroke="#222" stroke-width="1.2" fill="none"/><path d="M1.5 10.3H8.5" stroke="#222" stroke-width="0.9"/></svg>
<div class="t" style="left:664.3px;top:347.5px;font-size:7.4px;color:#333">= New Series</div>
<div class="t" style="left:513.7px;top:364.5px;font-size:7.2px;color:#333">Series <u>v</u>alues:</div>
<div class="box" style="left:513px;top:375px;width:144px;height:12px"></div><div class="a" style="left:644px;top:375px;width:13px;height:12px;background:#f8f8f8;border-left:1px solid #ececec"></div>
<div class="t" style="left:515.5px;top:378px;font-size:7.3px;color:#222">=Sheet1!$G$2:$G$6</div>
<svg class="a" style="left:646px;top:376px" width="10" height="11"><path d="M5 9V1.5M2 4.5L5 1.5L8 4.5" stroke="#222" stroke-width="1.2" fill="none"/><path d="M1.5 10.3H8.5" stroke="#222" stroke-width="0.9"/></svg>
<div class="t" style="left:664.3px;top:378.5px;font-size:7.4px;color:#555"><span style="color:#bbb">=</span> , 66000, , ,</div>
<div class="a" style="left:619.5px;top:396.5px;width:49px;height:18px;background:#fdfdfd;border:1px solid #a9cbea;border-radius:3px"></div>
<div class="t" style="left:619.5px;width:49px;text-align:center;top:401.5px;font-size:7.5px;color:#222">OK</div>
<div class="a" style="left:677.5px;top:396.5px;width:47px;height:18px;background:#fbfbfb;border:1px solid #e2e2e2;border-radius:3px"></div>
<div class="t" style="left:677.5px;width:47px;text-align:center;top:401.5px;font-size:7.3px;color:#222">Cancel</div>

</div></body></html>
